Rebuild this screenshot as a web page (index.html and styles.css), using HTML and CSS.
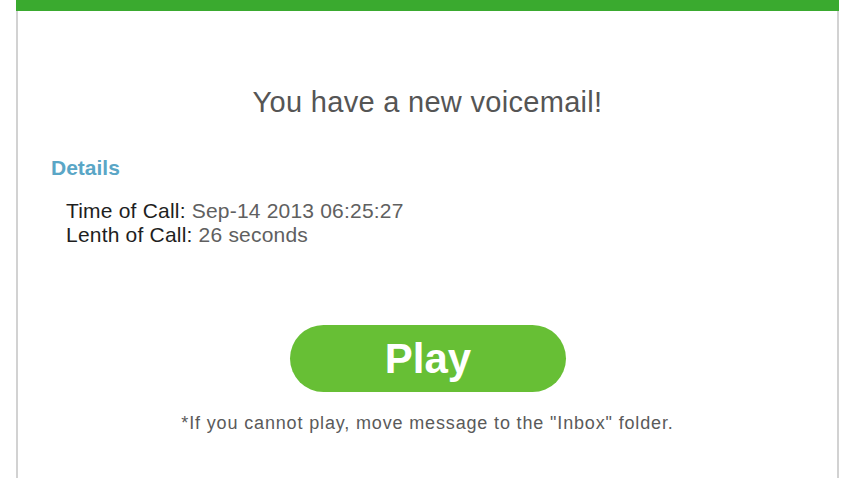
FILE: index.html
```html
<!DOCTYPE html>
<html>
<head>
<meta charset="utf-8">
<link rel="stylesheet" href="styles.css">
</head>
<body>
<div class="card">
  <div class="topbar"></div>
  <div class="content">
    <h1 class="title">You have a new voicemail!</h1>
    <h2 class="details-head">Details</h2>
    <div class="details">
      <div class="row"><span class="label">Time of Call:</span> <span class="value">Sep-14 2013 06:25:27</span></div>
      <div class="row"><span class="label">Lenth of Call:</span> <span class="value">26 seconds</span></div>
    </div>
    <div class="actions">
      <a class="play" href="#">Play</a>
    </div>
    <p class="note">*If you cannot play, move message to the "Inbox" folder.</p>
  </div>
</div>
</body>
</html>
```

FILE: styles.css
```css
html, body {
  margin: 0;
  padding: 0;
  background: #ffffff;
  font-family: "Liberation Sans", Arial, sans-serif;
  overflow: hidden;
}

.card {
  margin-left: 16px;
  width: 823px;
  height: 478px;
  display: flex;
  flex-direction: column;
}

.topbar {
  height: 11px;
  background: #3aaa2f;
  flex: none;
}

.content {
  flex: 1;
  border-left: 2px solid #d2d2d2;
  border-right: 2px solid #d2d2d2;
  padding: 0 33px;
}

.title {
  margin: 74px 0 0;
  font-size: 29px;
  line-height: 34px;
  font-weight: normal;
  color: #555555;
  text-align: center;
  letter-spacing: 0.3px;
}

.details-head {
  margin: 37px 0 0;
  font-size: 21px;
  line-height: 24px;
  font-weight: bold;
  color: #5aa6c6;
}

.details {
  margin-top: 19px;
  padding-left: 15px;
  font-size: 21px;
  line-height: 24px;
  letter-spacing: 0.2px;
}

.label {
  color: #1e1e1e;
}

.value {
  color: #606060;
}

.actions {
  margin-top: 78px;
  display: flex;
  justify-content: center;
  padding-left: 1px;
}

.play {
  display: block;
  width: 276px;
  height: 67px;
  border-radius: 34px;
  background: #67bf35;
  color: #ffffff;
  font-size: 42px;
  line-height: 67px;
  font-weight: bold;
  text-align: center;
  text-decoration: none;
}

.note {
  margin: 21px 0 0;
  font-size: 18px;
  line-height: 21px;
  color: #5a5a5a;
  text-align: center;
  letter-spacing: 0.85px;
}
```
